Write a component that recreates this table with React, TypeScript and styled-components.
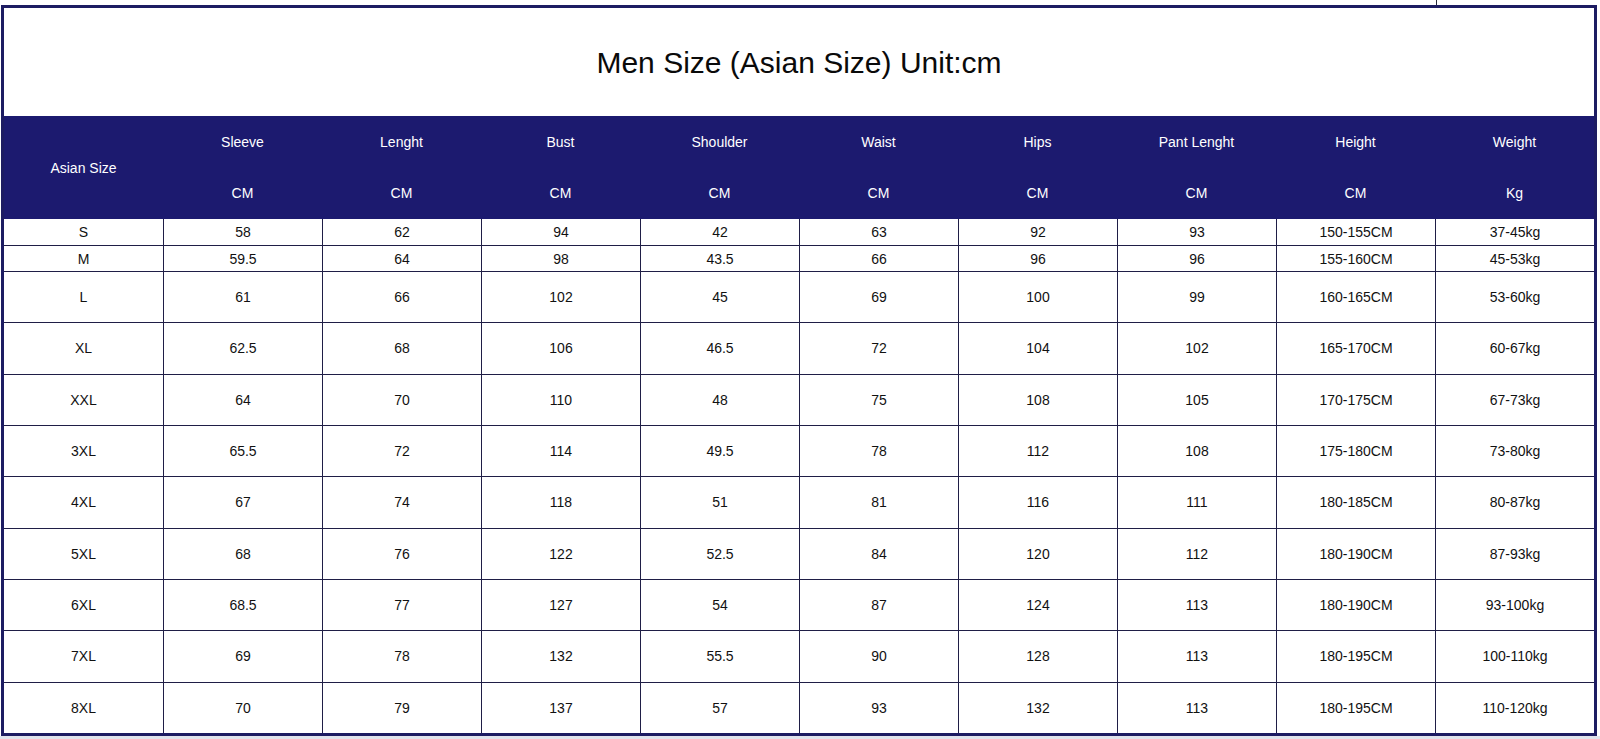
import React from 'react';
import styled, { createGlobalStyle } from 'styled-components';

const GlobalStyle = createGlobalStyle`
  html, body {
    margin: 0;
    padding: 0;
    background: #ffffff;
  }
  body {
    font-family: "Liberation Sans", Arial, sans-serif;
    width: 1600px;
    height: 739px;
    overflow: hidden;
  }
`;

const columns = [
  { name: 'Sleeve', unit: 'CM' },
  { name: 'Lenght', unit: 'CM' },
  { name: 'Bust', unit: 'CM' },
  { name: 'Shoulder', unit: 'CM' },
  { name: 'Waist', unit: 'CM' },
  { name: 'Hips', unit: 'CM' },
  { name: 'Pant Lenght', unit: 'CM' },
  { name: 'Height', unit: 'CM' },
  { name: 'Weight', unit: 'Kg' },
];

const rows: string[][] = [
  ['S', '58', '62', '94', '42', '63', '92', '93', '150-155CM', '37-45kg'],
  ['M', '59.5', '64', '98', '43.5', '66', '96', '96', '155-160CM', '45-53kg'],
  ['L', '61', '66', '102', '45', '69', '100', '99', '160-165CM', '53-60kg'],
  ['XL', '62.5', '68', '106', '46.5', '72', '104', '102', '165-170CM', '60-67kg'],
  ['XXL', '64', '70', '110', '48', '75', '108', '105', '170-175CM', '67-73kg'],
  ['3XL', '65.5', '72', '114', '49.5', '78', '112', '108', '175-180CM', '73-80kg'],
  ['4XL', '67', '74', '118', '51', '81', '116', '111', '180-185CM', '80-87kg'],
  ['5XL', '68', '76', '122', '52.5', '84', '120', '112', '180-190CM', '87-93kg'],
  ['6XL', '68.5', '77', '127', '54', '87', '124', '113', '180-190CM', '93-100kg'],
  ['7XL', '69', '78', '132', '55.5', '90', '128', '113', '180-195CM', '100-110kg'],
  ['8XL', '70', '79', '137', '57', '93', '132', '113', '180-195CM', '110-120kg'],
];

const Page = styled.div`
  display: flex;
  flex-direction: column;
  width: 1600px;
`;

const PrevTableEdge = styled.div`
  height: 5px;
  display: flex;
  padding-left: 1436px;
`;

const EdgeLine = styled.div`
  width: 1px;
  background: #2a2a3a;
`;

const Sheet = styled.div`
  width: 1590px;
  margin-left: 1px;
  border: 3px solid #1d1c62;
  display: flex;
  flex-direction: column;
  background: #ffffff;
`;

const Title = styled.div`
  height: 108px;
  display: flex;
  align-items: center;
  justify-content: center;
  font-size: 30px;
  color: #0a0a0a;
  padding-top: 1px;
  box-sizing: border-box;
`;

const Header = styled.div`
  display: grid;
  grid-template-columns: repeat(10, 159px);
  grid-template-rows: 51px 52px;
  background: #1c1a6f;
  color: #ffffff;
  font-size: 14px;
`;

const HeadCell = styled.div<{ $span?: boolean }>`
  display: flex;
  align-items: center;
  justify-content: center;
  ${({ $span }) => ($span ? 'grid-row: 1 / span 2;' : '')}
`;

const Body = styled.div`
  display: grid;
  grid-template-columns: repeat(10, 159px);
  grid-template-rows: 26px 26px repeat(9, 1fr);
  height: 514px;
  font-size: 14px;
  color: #111111;
`;

const Cell = styled.div<{ $first: boolean; $top: boolean }>`
  display: flex;
  align-items: center;
  justify-content: center;
  box-sizing: border-box;
  border-left: ${({ $first }) => ($first ? 'none' : '1px solid #1f1e46')};
  border-top: ${({ $top }) => ($top ? 'none' : '1px solid #1f1e46')};
`;

const BottomStrip = styled.div`
  height: 3px;
  background: #e0e4ec;
`;

export default function App() {
  return (
    <Page>
      <GlobalStyle />
      <PrevTableEdge>
        <EdgeLine />
      </PrevTableEdge>
      <Sheet>
        <Title>Men Size (Asian Size) Unit:cm</Title>
        <Header>
          <HeadCell $span>Asian Size</HeadCell>
          {columns.map((c) => (
            <HeadCell key={c.name}>{c.name}</HeadCell>
          ))}
          {columns.map((c) => (
            <HeadCell key={c.name + '-unit'}>{c.unit}</HeadCell>
          ))}
        </Header>
        <Body>
          {rows.map((row, r) =>
            row.map((value, i) => (
              <Cell key={r + '-' + i} $first={i === 0} $top={r === 0}>
                {value}
              </Cell>
            ))
          )}
        </Body>
      </Sheet>
      <BottomStrip />
    </Page>
  );
}
